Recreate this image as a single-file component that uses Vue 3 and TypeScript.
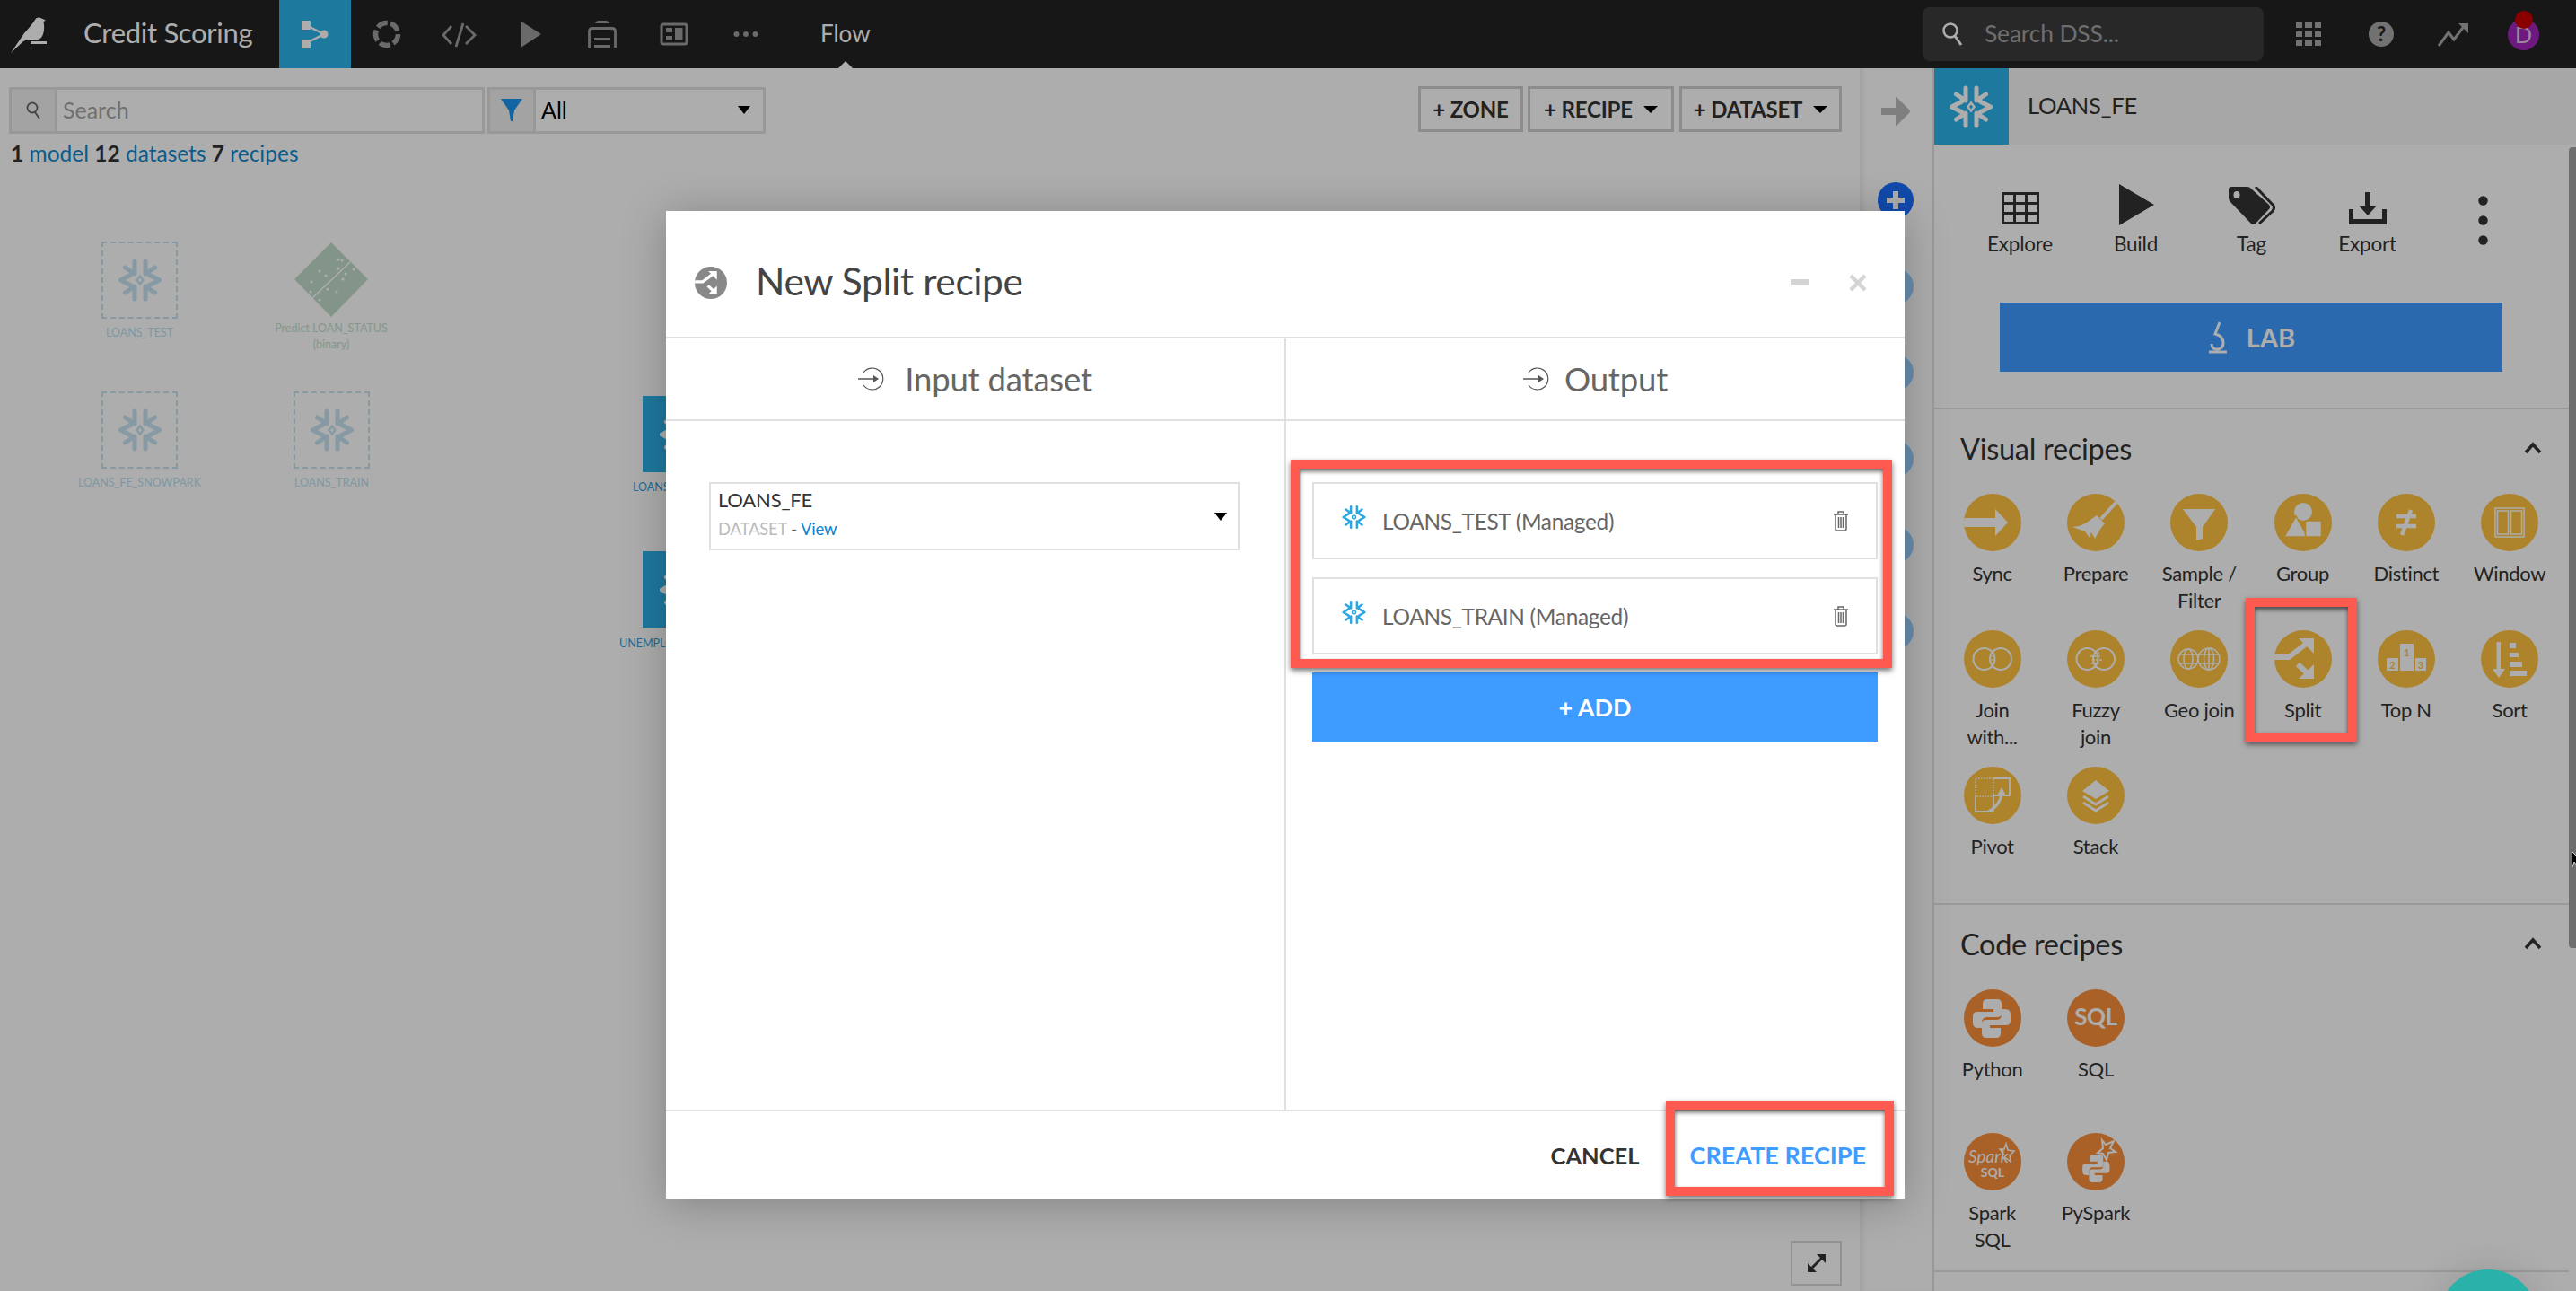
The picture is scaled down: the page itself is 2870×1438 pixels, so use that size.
<script setup lang="ts">
interface Recipe { id: string; label: string }
interface FlowNode { name: string; x: number; y: number }

const navIcons: string[] = ['n-ring', 'n-code', 'n-play', 'n-jobs', 'n-dash', 'n-dots']
const visual: Recipe[] = [
  { id: 'r-sync', label: 'Sync' },
  { id: 'r-prepare', label: 'Prepare' },
  { id: 'r-filter', label: 'Sample /\nFilter' },
  { id: 'r-group', label: 'Group' },
  { id: 'r-distinct', label: 'Distinct' },
  { id: 'r-window', label: 'Window' },
  { id: 'r-join', label: 'Join\nwith...' },
  { id: 'r-fuzzy', label: 'Fuzzy\njoin' },
  { id: 'r-geo', label: 'Geo join' },
  { id: 'r-split', label: 'Split' },
  { id: 'r-top', label: 'Top N' },
  { id: 'r-sort', label: 'Sort' },
  { id: 'r-pivot', label: 'Pivot' },
  { id: 'r-stack', label: 'Stack' },
]
const code: Recipe[] = [
  { id: 'r-python', label: 'Python' },
  { id: 'r-sql', label: 'SQL' },
  { id: 'r-spark', label: 'Spark\nSQL' },
  { id: 'r-pyspark', label: 'PySpark' },
]
const actions: { id: string; label: string }[] = [
  { id: 'a-explore', label: 'Explore' },
  { id: 'a-build', label: 'Build' },
  { id: 'a-tag', label: 'Tag' },
  { id: 'a-export', label: 'Export' },
]
const nodes: FlowNode[] = [
  { name: 'LOANS_TEST', x: 113, y: 269 },
  { name: 'LOANS_FE_SNOWPARK', x: 113, y: 436 },
  { name: 'LOANS_TRAIN', x: 327, y: 436 },
]
const railDots: number[] = [1, 2, 3, 4, 5]
const outputs: string[] = ['LOANS_TEST (Managed)', 'LOANS_TRAIN (Managed)']
</script>

<template>
  <div class="page">
    <svg class="sprite" aria-hidden="true">
      <defs>
        <symbol id="snow" viewBox="0 0 48 48">
          <g fill="none" stroke="currentColor" stroke-width="5" stroke-linecap="round" stroke-linejoin="round">
            <path d="M18 3V17L7.500 10M30 3V17L40.500 10M18 45V31L7.500 38M30 45V31L40.500 38" />
            <path d="M2.500 24L14 18M2.500 24L14 30M45.500 24L34 18M45.500 24L34 30" />
          </g>
          <path d="M24 19.500L27.500 24L24 28.500L20.500 24Z" fill="none" stroke="currentColor" stroke-width="2.500" />
        </symbol>
        <symbol id="snow-thin" viewBox="0 0 48 48">
          <g fill="none" stroke="currentColor" stroke-width="4.500" stroke-linecap="round" stroke-linejoin="round">
            <path d="M18 3V16L8 9M30 3V16L40 9M18 45V32L8 39M30 45V32L40 39" />
            <path d="M3 24L14 17M3 24L14 31M45 24L34 17M45 24L34 31" />
          </g>
          <circle cx="24" cy="24" r="3.500" fill="none" stroke="currentColor" stroke-width="2.500" />
        </symbol>
        <symbol id="split" viewBox="0 0 64 64">
          <path d="M0 30H16L38 13M26 38L38 49" fill="none" stroke="currentColor" stroke-width="6" />
          <path d="M27 9H44V26ZM27 54H44V38Z" fill="currentColor" />
        </symbol>
        <symbol id="io" viewBox="0 0 32 26">
          <path d="M6 6A12 12 0 1 1 6 20" fill="none" stroke="currentColor" stroke-width="1.200" />
          <path d="M0 13H21" stroke="currentColor" stroke-width="1.500" />
          <path d="M17 9L23 13L17 17Z" fill="currentColor" />
        </symbol>
        <symbol id="trash" viewBox="0 0 18 24">
          <path d="M1 5H17M6 5V2H12V5M3 5V21Q3 23 5 23H13Q15 23 15 21V5M6.500 8V20M9 8V20M11.500 8V20" fill="none" stroke="currentColor" stroke-width="1.500" />
        </symbol>

        <symbol id="n-flow" viewBox="-20 -20 40 40">
          <path d="M-10 -10L10 0L-10 10" fill="none" stroke="currentColor" stroke-width="2.500" />
          <rect x="-15" y="-15" width="10" height="10" fill="currentColor" />
          <rect x="-15" y="6" width="10" height="10" fill="currentColor" />
          <circle cx="10" cy="0" r="4.500" fill="currentColor" />
        </symbol>
        <symbol id="n-ring" viewBox="-20 -20 40 40">
          <circle r="12.500" fill="none" stroke="currentColor" stroke-width="5.500" stroke-dasharray="12 3.700" transform="rotate(-72)" />
        </symbol>
        <symbol id="n-code" viewBox="-20 -20 40 40">
          <path d="M-8 -9L-17 1L-8 11M8 -9L18 1L8 11M5 -12L-3 14" fill="none" stroke="currentColor" stroke-width="2.800" />
        </symbol>
        <symbol id="n-play" viewBox="-20 -20 40 40"><path d="M-10 -14L12 0L-10 14.500Z" fill="currentColor" /></symbol>
        <symbol id="n-jobs" viewBox="-20 -20 40 40">
          <path d="M-8 -12Q-7 -15 -4 -15H4Q7 -15 8 -12Z" fill="currentColor" />
          <path d="M-14.500 15V-3Q-14.500 -6.500 -11 -6.500H11Q14.500 -6.500 14.500 -3V15" fill="none" stroke="currentColor" stroke-width="2.800" />
          <path d="M-9 5.500H9M-9 13.500H9" stroke="currentColor" stroke-width="3" />
        </symbol>
        <symbol id="n-dash" viewBox="-20 -20 40 40">
          <rect x="-14" y="-11" width="28" height="22" rx="2" fill="none" stroke="currentColor" stroke-width="3" />
          <path d="M-9 -7H-2V-2H-9ZM-9 2H-2V6.500H-9ZM1 -7H9.500V6.500H1Z" fill="currentColor" />
        </symbol>
        <symbol id="n-dots" viewBox="-20 -20 40 40">
          <circle cx="-10.500" r="3" fill="currentColor" /><circle r="3" fill="currentColor" /><circle cx="10.500" r="3" fill="currentColor" />
        </symbol>

        <symbol id="a-explore" viewBox="0 0 42 36">
          <path fill-rule="evenodd" fill="currentColor" d="M0 0H42V36H0ZM3 3V11H13V3ZM16 3V11H26V3ZM29 3V11H39V3ZM3 14V22H13V14ZM16 14V22H26V14ZM29 14V22H39V14ZM3 25V33H13V25ZM16 25V33H26V25ZM29 25V33H39V25Z" />
        </symbol>
        <symbol id="a-build" viewBox="0 0 42 46"><path d="M2 0L41 23L2 46Z" fill="currentColor" /></symbol>
        <symbol id="a-tag" viewBox="0 0 52 42">
          <path fill-rule="evenodd" fill="currentColor" d="M3 0H21Q24 0 26 3L45 20Q47 23 45 25L30 41Q28 43 25 41L2 17Q0 15 0 12V3Q0 0 3 0ZM9 5A3.500 4 0 1 0 9 13A3.500 4 0 1 0 9 5Z" />
          <path d="M30 0L49 20Q52 23 49 27L34 41" fill="none" stroke="currentColor" stroke-width="3" />
        </symbol>
        <symbol id="a-export" viewBox="0 0 42 36">
          <path d="M18 0H24V15H31L21 26L11 15H18ZM0 19H5V30H37V19H42V36H0Z" fill="currentColor" />
        </symbol>
        <symbol id="a-lab" viewBox="0 0 24 36">
          <path d="M14 1L9 14Q18 16 18 24Q18 31 11 31Q5 31 5 25M2 34H22" fill="none" stroke="currentColor" stroke-width="3" />
        </symbol>

        <symbol id="r-sync" viewBox="0 0 64 64"><path d="M0 27H35V17L49 32L35 47V37H0Z" fill="currentColor" /></symbol>
        <symbol id="r-prepare" viewBox="0 0 64 64">
          <path d="M56 8L38 28" stroke="currentColor" stroke-width="4" />
          <path d="M33 24L42 33L38 38L31 50L27 43L25 49L20 42L6 37Q18 36 26 29Z" fill="currentColor" />
        </symbol>
        <symbol id="r-filter" viewBox="0 0 64 64"><path d="M14 17H50L36 37V50L29 52V37Z" fill="currentColor" /></symbol>
        <symbol id="r-group" viewBox="0 0 64 64">
          <circle cx="32" cy="20" r="10" fill="currentColor" />
          <path d="M11 48L24 25L37 48Z" fill="currentColor" stroke="#ffc241" stroke-width="1.500" />
          <rect x="34.500" y="30" width="18" height="18" fill="currentColor" stroke="#ffc241" stroke-width="1.500" />
        </symbol>
        <symbol id="r-distinct" viewBox="0 0 64 64">
          <path d="M21 25H43M21 36H43M37 18L27 46" fill="none" stroke="currentColor" stroke-width="4.500" />
        </symbol>
        <symbol id="r-window" viewBox="0 0 64 64">
          <rect x="16" y="16" width="32" height="32" fill="none" stroke="currentColor" stroke-width="1.500" />
          <rect x="18.500" y="19" width="12" height="26" fill="none" stroke="currentColor" stroke-width="1.500" />
          <rect x="33.500" y="19" width="12" height="26" fill="none" stroke="currentColor" stroke-width="1.500" />
        </symbol>
        <symbol id="r-join" viewBox="0 0 64 64">
          <circle cx="22.500" cy="32" r="12" fill="none" stroke="currentColor" stroke-width="2" />
          <circle cx="41" cy="32" r="12" fill="none" stroke="currentColor" stroke-width="2" />
          <path d="M30 25H34M29 29H35M29 33H35M30 37H34" stroke="currentColor" stroke-width="1" />
        </symbol>
        <symbol id="r-fuzzy" viewBox="0 0 64 64">
          <circle cx="22.500" cy="32" r="12" fill="none" stroke="currentColor" stroke-width="2" />
          <circle cx="41" cy="32" r="12" fill="none" stroke="currentColor" stroke-width="2" />
          <path d="M30 25H36M26 29H38M28 33H40M27 37H36M30 41H34" stroke="currentColor" stroke-width="1.500" stroke-dasharray="3 1" />
        </symbol>
        <symbol id="r-geo" viewBox="0 0 64 64">
          <g fill="none" stroke="currentColor" stroke-width="1.500">
            <circle cx="20" cy="32" r="11" /><ellipse cx="20" cy="32" rx="5" ry="11" /><path d="M10 27H30M10 37H30" />
            <circle cx="43" cy="32" r="12" /><ellipse cx="43" cy="32" rx="5.500" ry="12" /><path d="M32 27H54M32 37H54M43 20V44" />
          </g>
        </symbol>
        <symbol id="r-split" viewBox="0 0 64 64"><use href="#split" width="64" height="64" /></symbol>
        <symbol id="r-top" viewBox="0 0 64 64">
          <path d="M25 15H40V45H25ZM10 31H23V45H10ZM42 31H54V45H42Z" fill="currentColor" />
          <text x="32.500" y="29" class="podium">1</text>
          <text x="16.500" y="43" class="podium">2</text>
          <text x="48" y="43" class="podium">3</text>
        </symbol>
        <symbol id="r-sort" viewBox="0 0 64 64">
          <path d="M17.500 13H22V43H27L20 53L13 43H17.500Z" fill="currentColor" />
          <path d="M32 14H39V20H32ZM32 25H42V30H32ZM32 35H46V41H32ZM32 45H51V51H32Z" fill="currentColor" />
        </symbol>
        <symbol id="r-pivot" viewBox="0 0 64 64">
          <rect x="13" y="13" width="20" height="20" fill="none" stroke="currentColor" stroke-width="1.500" stroke-dasharray="1.500 1.500" />
          <path d="M33 13H51V32H33V50H13V33" fill="none" stroke="currentColor" stroke-width="1.800" />
          <path d="M27 50Q40 44 42 30" fill="none" stroke="currentColor" stroke-width="3" />
          <path d="M42 23L47 32H37Z" fill="currentColor" />
        </symbol>
        <symbol id="r-stack" viewBox="0 0 64 64">
          <path d="M32 15L47 27L32 36L17 27Z" fill="currentColor" />
          <path d="M18 33L32 42L46 33M18 40L32 49L46 40" fill="none" stroke="currentColor" stroke-width="3" />
        </symbol>
        <symbol id="r-python" viewBox="0 0 64 64">
          <g fill="currentColor">
            <path d="M26 11H37Q42 11 42 16V27Q42 31 37 31H26Q20 31 20 37V43H16Q10 43 10 37V30Q10 25 15 25H33V22H21V16Q21 11 26 11Z" />
            <path transform="rotate(180 31 32.500)" d="M26 11H37Q42 11 42 16V27Q42 31 37 31H26Q20 31 20 37V43H16Q10 43 10 37V30Q10 25 15 25H33V22H21V16Q21 11 26 11Z" />
          </g>
        </symbol>
        <symbol id="r-sql" viewBox="0 0 64 64"><text x="32" y="40" class="sqltxt">SQL</text></symbol>
        <symbol id="r-spark" viewBox="0 0 64 64">
          <text x="5" y="33" class="sparktxt">Spark</text>
          <text x="32" y="49" class="sparksql">SQL</text>
          <path d="M47 12L49 19L56 20L51 25L52 32L47 28L42 29L44 23L40 18L45 18Z" fill="none" stroke="currentColor" stroke-width="1.500" />
        </symbol>
        <symbol id="r-pyspark" viewBox="0 0 64 64">
          <g transform="translate(10 16) scale(.72)" fill="currentColor">
            <path d="M26 11H37Q42 11 42 16V27Q42 31 37 31H26Q20 31 20 37V43H16Q10 43 10 37V30Q10 25 15 25H33V22H21V16Q21 11 26 11Z" />
            <path transform="rotate(180 31 32.500)" d="M26 11H37Q42 11 42 16V27Q42 31 37 31H26Q20 31 20 37V43H16Q10 43 10 37V30Q10 25 15 25H33V22H21V16Q21 11 26 11Z" />
          </g>
          <path d="M39 8L43 13L52 9L48 17L54 21L46 22L44 30L40 23L34 22L40 17Z" fill="none" stroke="currentColor" stroke-width="2" />
        </symbol>
      </defs>
    </svg>

    <header class="topbar">
      <svg class="bird" width="60" height="76" viewBox="0 0 60 76">
        <path d="M12 59L27 37Q36 27 39 22Q40 19 44 19.500L51 22.500L48.500 24Q50 32 48 38Q46 45 38 44.500L31 44L26 46Z" fill="currentColor" />
        <rect x="34" y="46" width="18" height="3" fill="currentColor" />
      </svg>
      <div class="project">Credit Scoring</div>
      <div class="tab active"><svg width="40" height="40"><use href="#n-flow" /></svg></div>
      <div v-for="n in navIcons" :key="n" class="tab"><svg width="40" height="40"><use :href="'#' + n" /></svg></div>
      <div class="crumb">Flow<span class="crumb-tip"></span></div>
      <div class="top-right">
        <div class="global-search">
          <svg width="24" height="28" viewBox="0 0 24 28"><circle cx="10" cy="10" r="7.500" fill="none" stroke="currentColor" stroke-width="2.500" /><path d="M15 16L22 26" stroke="currentColor" stroke-width="3" /></svg>
          <span>Search DSS...</span>
        </div>
        <svg class="t-ico t-grid" width="28" height="28" viewBox="0 0 28 28"><path fill="currentColor" d="M0 1H7V7H0ZM10 1H18V7H10ZM21 1H28V7H21ZM0 11H7V17H0ZM10 11H18V17H10ZM21 11H28V17H21ZM0 21H7V27H0ZM10 21H18V27H10ZM21 21H28V27H21Z" /></svg>
        <div class="help">?</div>
        <svg class="t-ico t-trend" width="36" height="30" viewBox="0 0 36 30"><path d="M1 28L12 13L18 21L30 5" fill="none" stroke="currentColor" stroke-width="3" /><path d="M23 3H34V14Z" fill="currentColor" /></svg>
        <div class="avatar">D<span class="notif"></span></div>
      </div>
    </header>

    <main class="main">
      <section class="flow">
        <div class="toolbar">
          <div class="field search-field">
            <span class="addon"><svg width="16" height="20" viewBox="0 0 16 20"><circle cx="7" cy="7" r="5.500" fill="none" stroke="currentColor" stroke-width="1.800" /><path d="M10 12L15 19" stroke="currentColor" stroke-width="2" /></svg></span>
            <span class="ph">Search</span>
          </div>
          <div class="field filter-field">
            <span class="addon"><svg width="26" height="26" viewBox="0 0 26 26"><path d="M1 0H25L16 13L14 25H12L10 13Z" fill="currentColor" /></svg></span>
            <span class="all">All</span>
            <span class="caret"></span>
          </div>
          <div class="flow-btns">
            <button class="btn b-zone">+ ZONE</button>
            <button class="btn b-recipe">+ RECIPE<span class="caret small"></span></button>
            <button class="btn b-data">+ DATASET<span class="caret small"></span></button>
          </div>
        </div>
        <div class="stats"><b>1</b> <a>model</a> <b>12</b> <a>datasets</a> <b>7</b> <a>recipes</a></div>

        <div v-for="n in nodes" :key="n.name" class="node" :style="{ left: n.x + 'px', top: n.y - 76 + 'px' }">
          <svg class="snow-ghost" width="48" height="48"><use href="#snow" /></svg>
          <span class="node-label">{{ n.name }}</span>
        </div>
        <div class="model">
          <svg width="84" height="84" viewBox="0 0 84 84">
            <path d="M42 0L83 41L42 83L1 41Z" fill="currentColor" />
            <path d="M21 62L63 22" stroke="#fff" stroke-width="1.500" />
            <g fill="#fff"><circle cx="50" cy="19" r="1.500" /><circle cx="54" cy="20" r="1.500" /><circle cx="29" cy="32" r="1.500" /><circle cx="36" cy="37" r="1.500" /><circle cx="50" cy="29" r="1.500" /><circle cx="58" cy="35" r="1.500" /><circle cx="67" cy="30" r="1.500" /><circle cx="20" cy="44" r="1.500" /><circle cx="19" cy="55" r="1.500" /><circle cx="38" cy="52" r="1.500" /><circle cx="48" cy="55" r="1.500" /><circle cx="55" cy="41" r="1.500" /><circle cx="29" cy="64" r="1.500" /></g>
          </svg>
          <span class="model-label">Predict LOAN_STATUS<br />(binary)</span>
        </div>
        <div class="solid s1"><svg width="48" height="48"><use href="#snow" /></svg></div>
        <span class="solid-label l1">LOANS_FE</span>
        <div class="solid s2"><svg width="48" height="48"><use href="#snow" /></svg></div>
        <span class="solid-label l2">UNEMPLOYMENT</span>

        <button class="expand">
          <svg width="24" height="24" viewBox="0 0 24 24"><path d="M4 20L20 4" stroke="currentColor" stroke-width="3" /><path d="M12 2H22V12ZM2 12V22H12Z" fill="currentColor" /></svg>
        </button>
      </section>

      <aside class="rail">
        <svg class="rail-arrow" width="32" height="34" viewBox="0 0 32 34"><path d="M0 13H16V2Q16 0 18 2L31 15Q33 17 31 19L18 32Q16 34 16 32V21H0Z" fill="currentColor" /></svg>
        <div class="rail-plus"><svg width="22" height="22" viewBox="0 0 22 22"><path d="M8 1H14V8H21V14H14V21H8V14H1V8H8Z" fill="#fff" /></svg></div>
        <div v-for="d in railDots" :key="d" class="rail-dot"></div>
      </aside>

      <aside class="panel">
        <div class="panel-head">
          <div class="panel-badge"><svg width="48" height="48"><use href="#snow" /></svg></div>
          <span class="panel-title">LOANS_FE</span>
        </div>
        <div class="panel-body">
          <div class="actions">
            <div v-for="a in actions" :key="a.id" class="action">
              <span class="action-ico"><svg :class="a.id"><use :href="'#' + a.id" /></svg></span>
              <span>{{ a.label }}</span>
            </div>
            <div class="action">
              <svg width="11" height="55" viewBox="0 0 11 55" class="a-more"><circle cx="5.500" cy="5.500" r="5.200" fill="currentColor" /><circle cx="5.500" cy="27.500" r="5.200" fill="currentColor" /><circle cx="5.500" cy="49.500" r="5.200" fill="currentColor" /></svg>
            </div>
          </div>
          <button class="lab"><svg width="24" height="36"><use href="#a-lab" /></svg><span>LAB</span></button>

          <section class="recipes visual">
            <div class="rec-head"><h3>Visual recipes</h3><svg width="20" height="14" viewBox="0 0 20 14"><path d="M2 12L10 3L18 12" fill="none" stroke="currentColor" stroke-width="3.500" /></svg></div>
            <div class="rec-grid">
              <div v-for="r in visual" :key="r.id" class="rec">
                <span class="rec-ico"><svg width="64" height="64"><use :href="'#' + r.id" /></svg></span>
                <span class="rec-label">{{ r.label }}</span>
              </div>
            </div>
          </section>
          <section class="recipes code">
            <div class="rec-head"><h3>Code recipes</h3><svg width="20" height="14" viewBox="0 0 20 14"><path d="M2 12L10 3L18 12" fill="none" stroke="currentColor" stroke-width="3.500" /></svg></div>
            <div class="rec-grid">
              <div v-for="r in code.slice(0, 2)" :key="r.id" class="rec">
                <span class="rec-ico"><svg width="64" height="64"><use :href="'#' + r.id" /></svg></span>
                <span class="rec-label">{{ r.label }}</span>
              </div>
              <div class="row-break"></div>
              <div v-for="r in code.slice(2)" :key="r.id" class="rec">
                <span class="rec-ico"><svg width="64" height="64"><use :href="'#' + r.id" /></svg></span>
                <span class="rec-label">{{ r.label }}</span>
              </div>
            </div>
          </section>
          <div class="recipes end"></div>
        </div>
        <div class="scrollbar"></div>
      </aside>
    </main>

    <div class="backdrop"></div>

    <div class="modal">
      <div class="m-head">
        <span class="m-icon"><svg width="36" height="36"><use href="#split" /></svg></span>
        <h2>New Split recipe</h2>
        <span class="m-min"></span>
        <svg class="m-x" width="20" height="20" viewBox="0 0 20 20"><path d="M2 2L18 18M18 2L2 18" stroke="currentColor" stroke-width="4.500" /></svg>
      </div>
      <div class="m-body">
        <div class="m-col left">
          <div class="col-title"><svg width="32" height="26"><use href="#io" /></svg><span>Input dataset</span></div>
          <div class="col-body">
            <div class="select">
              <div class="sel-name">LOANS_FE</div>
              <div class="sel-sub"><span>DATASET</span> - <a>View</a></div>
              <span class="caret sel-caret"></span>
            </div>
          </div>
        </div>
        <div class="m-col right">
          <div class="col-title"><svg width="32" height="26"><use href="#io" /></svg><span>Output</span></div>
          <div class="col-body out">
            <div v-for="o in outputs" :key="o" class="out-row">
              <svg class="out-snow" width="27" height="30"><use href="#snow-thin" /></svg>
              <span>{{ o }}</span>
              <svg class="out-trash" width="18" height="24"><use href="#trash" /></svg>
            </div>
            <button class="add">+ ADD</button>
          </div>
        </div>
      </div>
      <div class="m-foot">
        <button class="txt cancel">CANCEL</button>
        <button class="txt create">CREATE RECIPE</button>
      </div>
    </div>

    <div class="mark m-split"></div>
    <div class="mark m-out"></div>
    <div class="mark m-create"></div>
    <div class="bubble"></div>
    <svg class="cursor" width="6" height="20" viewBox="0 0 6 20"><path d="M0 0L6 6V16L3 12L0 20Z" fill="#000" stroke="#fff" stroke-width=".8" /></svg>
  </div>
</template>

<style>
html, body { margin: 0; padding: 0; background: #fff; }
</style>

<style scoped>
.page {
  position: relative;
  width: 2870px;
  height: 1438px;
  overflow: hidden;
  background: #fff;
  font-family: "Lato", "Open Sans", sans-serif;
  color: #333;
}
.sprite { position: absolute; width: 0; height: 0; }
.podium { font: 700 11px "Lato", sans-serif; fill: #ffc241; text-anchor: middle; }
.sqltxt { font: 700 26px "Lato", sans-serif; fill: #fff; text-anchor: middle; letter-spacing: -0.5px; }
.sparktxt { font: italic 400 19px "Lato", sans-serif; fill: #fff; }
.sparksql { font: 700 14px "Lato", sans-serif; fill: #fff; text-anchor: middle; }

.topbar { height: 76px; background: #222; display: flex; align-items: center; color: #fff; }
.bird { flex: none; margin-right: 33px; color: #fff; }
.project { width: 218px; font-size: 31px; flex: none; letter-spacing: -0.3px; margin-bottom: 4px; }
.tab { width: 80px; height: 76px; display: flex; align-items: center; justify-content: center; color: #9c9c9c; flex: none; }
.tab.active { background: #2db3eb; color: #fff; }
.crumb { position: relative; margin-left: 43px; font-size: 26px; height: 76px; line-height: 74px; color: #fff; }
.crumb-tip { position: absolute; left: 20px; bottom: 0; width: 0; height: 0; border: 8px solid transparent; border-top: 0; border-bottom-color: #fff; }
.top-right { margin-left: auto; display: flex; align-items: center; height: 76px; }
.global-search {
  width: 380px; height: 60px; box-sizing: border-box; padding-left: 21px; display: flex; align-items: center; gap: 24px;
  background: #3c3c3c; border-radius: 8px; margin-right: 36px; color: #fff; font-size: 26.500px;
}
.global-search span { color: #a3a3a3; letter-spacing: -0.2px; margin-bottom: 2px; }
.t-ico { color: #a8a8a8; flex: none; }
.t-grid { margin-right: 53px; }
.help {
  width: 28px; height: 28px; border-radius: 50%; background: #a8a8a8; color: #222; font: 700 22px/28px "Lato", sans-serif; text-align: center; margin-right: 49px; flex: none;
}
.t-trend { margin-right: 42px; }
.avatar {
  position: relative; width: 35px; height: 35px; border-radius: 50%; background: #a226bc; color: #e6c8ee; font-size: 25px; line-height: 35px; text-align: center; margin-right: 41px; flex: none;
}
.notif { position: absolute; width: 20px; height: 20px; border-radius: 50%; background: #cc0000; left: 8px; top: -9px; }

.main { display: flex; height: 1362px; }
.flow { position: relative; flex: none; width: 2072px; }
.toolbar { display: flex; align-items: flex-start; padding: 20px 20px 0 10px; }
.field { box-sizing: border-box; display: flex; align-items: center; height: 52px; border: 3px solid #e0e0e0; margin-top: 1px; }
.search-field { width: 530px; }
.filter-field { width: 310px; margin-left: 3px; position: relative; }
.addon { width: 48px; height: 100%; flex: none; display: flex; align-items: center; justify-content: center; background: #f1f1f1; border-right: 3px solid #e0e0e0; color: #666; }
.filter-field .addon { color: #1a96f0; }
.ph { margin: 0 0 3px 6px; color: #a6a6a6; font-size: 25px; }
.all { margin: 0 0 3px 6px; color: #000; font-size: 25px; }
.caret { width: 0; height: 0; border: 7px solid transparent; border-bottom: 0; border-top: 9px solid #000; }
.filter-field .caret { position: absolute; right: 14px; top: 18px; }
.flow-btns { margin-left: auto; display: flex; gap: 5px; }
.btn {
  box-sizing: border-box; height: 51px; background: #fff; border: 3px solid #cfcfcf; font: 700 24px "Lato", sans-serif; color: #333; display: flex; align-items: center; justify-content: center; padding: 0; letter-spacing: -0.2px;
}
.caret.small { margin-left: 12px; border-left-width: 8px; border-right-width: 8px; border-top-width: 8px; }
.b-zone { width: 117px; }
.b-recipe { width: 163px; }
.b-data { width: 181px; margin-left: 1px; }
.stats { margin: 7px 0 0 12px; font-size: 24.500px; line-height: 30px; }
.stats b { color: #333; font-weight: 700; }
.stats a { color: #1089cf; }

.node { position: absolute; width: 85px; height: 86px; box-sizing: border-box; border: 2px dashed #c8e2ee; display: flex; align-items: center; justify-content: center; }
.snow-ghost { color: #c8e4f0; }
.node-label { position: absolute; top: 100%; left: 50%; transform: translateX(-50%); white-space: nowrap; font-size: 12.500px; line-height: 16px; margin-top: 10px; color: #bcdff0; }
.model { position: absolute; left: 327px; top: 194px; width: 84px; color: #c2dccb; }
.model svg { display: block; }
.model-label { position: absolute; top: 87px; left: 50%; transform: translateX(-50%); white-space: nowrap; text-align: center; font-size: 12.500px; line-height: 18px; color: #c4e0cd; }
.solid { position: absolute; left: 716px; width: 85px; height: 85px; background: #2db3eb; color: #fff; display: flex; align-items: center; justify-content: center; }
.s1 { top: 365px; }
.s2 { top: 538px; }
.solid-label { position: absolute; font-size: 12.500px; line-height: 16px; color: #2da3da; white-space: nowrap; }
.l1 { left: 705px; top: 459px; }
.l2 { left: 690px; top: 633px; }
.expand { position: absolute; left: 1995px; top: 1306px; width: 57px; height: 50px; box-sizing: border-box; background: #fff; border: 2px solid #d8d8d8; color: #333; padding: 0; display: flex; align-items: center; justify-content: center; }

.rail { flex: none; width: 81px; box-sizing: border-box; border-left: 2px solid #f0f0f0; box-shadow: inset 4px 0 6px -3px rgba(0,0,0,.08); display: flex; flex-direction: column; align-items: center; padding: 31px 4px 0 0; }
.rail-arrow { color: #bcbcbc; flex: none; }
.rail-plus { width: 40px; height: 40px; border-radius: 50%; background: #1a6dff; margin-top: 62px; display: flex; align-items: center; justify-content: center; flex: none; }
.rail-dot { width: 40px; height: 40px; border-radius: 50%; background: #9dd2ff; margin-top: 56px; flex: none; }

.panel { position: relative; flex: none; width: 717px; box-sizing: border-box; border-left: 2px solid #e2e2e2; overflow: hidden; }
.panel-head { display: flex; align-items: center; height: 85px; background: #f7f7f7; }
.panel-badge { width: 85px; height: 85px; background: #2db3eb; color: #fff; display: flex; align-items: center; justify-content: center; flex: none; margin-left: -2px; }
.panel-title { margin: 0 0 4px 21px; font-size: 25.500px; color: #333; letter-spacing: -0.2px; }
.panel-body { padding-right: 8px; }
.actions { display: grid; grid-template-columns: repeat(5, 129px); padding: 44px 0 0 31px; height: 132px; }
.action { display: flex; flex-direction: column; align-items: center; font-size: 22.500px; line-height: 30px; color: #333; letter-spacing: -0.2px; }
.action-ico { height: 46px; margin-bottom: 6px; display: flex; align-items: center; justify-content: center; }
.action-ico svg { display: block; color: #333; }
.a-explore { width: 42px; height: 36px; margin-top: 8px; }
.a-build { width: 42px; height: 46px; }
.a-tag { width: 52px; height: 42px; margin-top: 2px; }
.a-export { width: 42px; height: 36px; margin-top: 8px; }
.a-more { margin-top: 13px; color: #333; flex: none; }
.lab {
  display: flex; align-items: center; justify-content: center; gap: 20px; width: 560px; height: 77px; margin: 0 0 40px 73px; padding: 0; border: 0; background: #3e9bff; color: #fff; font: 700 29px "Lato", sans-serif;
}
.recipes { border-top: 2px solid #e2e2e2; margin-left: -2px; }
.rec-head { display: flex; align-items: center; justify-content: space-between; height: 40px; padding: 23px 30px 0 31px; margin-bottom: 31px; }
.rec-head svg { color: #333; }
.rec-head h3 { margin: 0; font-size: 32.500px; font-weight: 400; color: #333; letter-spacing: -0.3px; }
.rec-grid { display: grid; grid-template-columns: repeat(6, 115.3px); padding-left: 9px; }
.visual .rec-grid { grid-auto-rows: 152px; }
.code .rec-grid { grid-template-rows: 160px 153px; }
.row-break { grid-column: 3 / 7; }
.rec { display: flex; flex-direction: column; align-items: center; }
.rec-ico { width: 64px; height: 64px; border-radius: 50%; background: #ffc241; color: #fff; overflow: hidden; flex: none; }
.code .rec-ico { background: #fa903c; }
.rec-ico svg { display: block; }
.rec-label { margin-top: 10px; font-size: 22px; line-height: 30px; color: #333; text-align: center; white-space: pre-line; letter-spacing: -0.3px; }
.scrollbar { position: absolute; right: 0; top: 88px; width: 8px; height: 892px; background: #a3a3a3; border-radius: 4px 0 0 4px; }

.backdrop { position: absolute; inset: 0; background: rgba(0, 0, 0, .32); }

.modal { position: absolute; left: 742px; top: 235px; width: 1380px; height: 1100px; background: #fff; display: flex; flex-direction: column; box-shadow: 0 5px 45px rgba(0,0,0,.25); }
.m-head { flex: none; height: 140px; display: flex; align-items: center; position: relative; border-bottom: 2px solid #e0e0e0; }
.m-icon { position: absolute; left: 32px; top: 62px; width: 36px; height: 36px; border-radius: 50%; background: #888; color: #fff; overflow: hidden; }
.m-icon svg { display: block; }
.m-head h2 { margin: 16px 0 0 100px; font-size: 42.500px; font-weight: 400; color: #444; letter-spacing: -0.4px; line-height: 60px; }
.m-min { position: absolute; left: 1253px; top: 76px; width: 21px; height: 6px; background: #d4d4d4; }
.m-x { position: absolute; left: 1318px; top: 70px; color: #d4d4d4; }
.m-body { flex: 1; display: flex; min-height: 0; }
.m-col { display: flex; flex-direction: column; box-sizing: border-box; }
.m-col.left { width: 691px; border-right: 2px solid #e0e0e0; }
.m-col.right { flex: 1; }
.col-title { flex: none; height: 90px; border-bottom: 2px solid #e0e0e0; display: flex; align-items: center; justify-content: center; gap: 20px; font-size: 36.500px; color: #666; letter-spacing: -0.2px; }
.m-col.right .col-title { gap: 14px; }
.col-title svg { color: #555; flex: none; }
.col-body { padding: 68px 0 0 48px; }
.select { position: relative; box-sizing: border-box; width: 591px; height: 76px; border: 2px solid #e0e0e0; padding: 2px 8px 3px; }
.sel-name { font-size: 22px; line-height: 32px; color: #333; letter-spacing: -0.2px; }
.sel-sub { font-size: 18.500px; line-height: 32px; color: #555; letter-spacing: -0.2px; }
.sel-sub span { color: #bbb; }
.sel-sub a { color: #0a84d0; }
.sel-caret { position: absolute; right: 12px; top: 32px; }
.col-body.out { padding: 68px 30px 0 29px; display: flex; flex-direction: column; gap: 20px; }
.out-row { position: relative; box-sizing: border-box; height: 86px; border: 2px solid #e0e0e0; display: flex; align-items: center; padding-left: 31px; font-size: 24.400px; color: #666; letter-spacing: -0.3px; }
.out-snow { color: #2ba6e0; margin-right: 18px; margin-top: -8px; flex: none; }
.out-trash { position: absolute; right: 30px; top: 29px; color: #666; }
.add { height: 77px; border: 0; padding: 0; background: #3e9bff; color: #fff; font: 700 27px "Lato", sans-serif; }
.m-foot { flex: none; height: 99px; box-sizing: border-box; border-top: 2px solid #e0e0e0; display: flex; align-items: center; justify-content: flex-end; gap: 56px; padding: 0 43px 0 0; }
.txt { border: 0; background: none; padding: 0; font: 700 27px "Lato", sans-serif; }
.cancel { color: #333; font-size: 25.500px; }
.create { color: #3e9bff; }

.mark { position: absolute; box-sizing: border-box; border: 10px solid #ff5a4f; box-shadow: 0 3px 6px rgba(0,0,0,.55), inset 0 3px 5px rgba(0,0,0,.6); }
.m-split { left: 2502px; top: 666px; width: 124px; height: 160px; }
.m-out { left: 1438px; top: 512px; width: 670px; height: 232px; }
.m-create { left: 1856px; top: 1226px; width: 254px; height: 106px; }
.bubble { position: absolute; left: 2717px; top: 1414px; width: 110px; height: 110px; border-radius: 50%; background: #2ab2aa; box-shadow: 0 0 40px rgba(0,0,0,.12); }
.cursor { position: absolute; left: 2865px; top: 948px; }
</style>
